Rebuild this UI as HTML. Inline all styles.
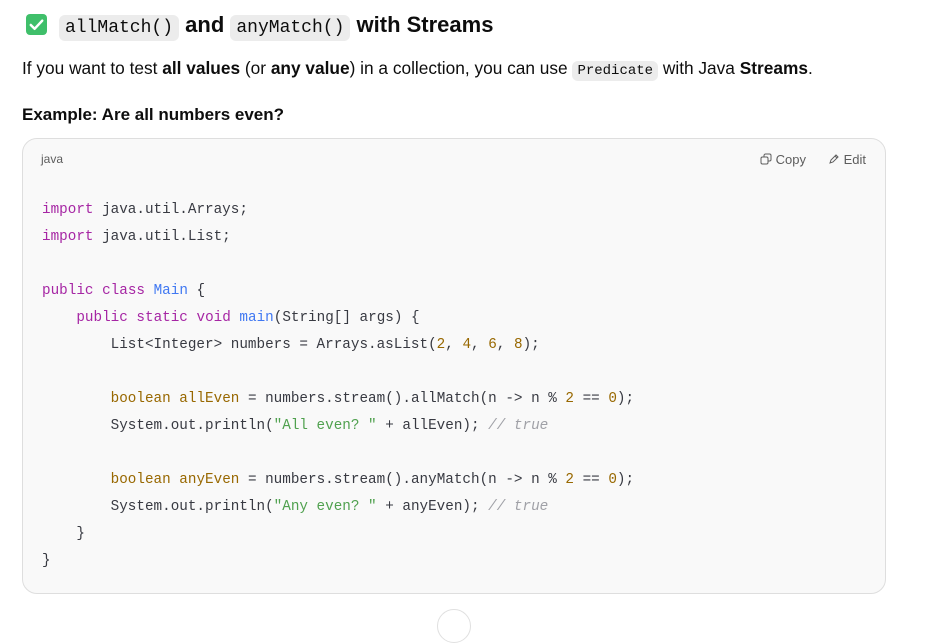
<!DOCTYPE html>
<html><head><meta charset="utf-8"><style>
body{margin:0;width:926px;height:618px;overflow:hidden;background:#fff;font-family:"Liberation Sans",sans-serif;color:#0d0d0d;position:relative}
.a{position:absolute;white-space:pre}
.ic{font-family:"Liberation Mono",monospace;background:#ececec;border-radius:6px}
h2{position:absolute;left:26px;top:8px;margin:0;font-size:22px;font-weight:bold;line-height:34px;white-space:pre}
h2 .ic{font-weight:normal;font-size:18px;padding:3px 6px}
.chk{display:inline-block;width:21px;height:21px;background:#3fbf6a;border-radius:4px;vertical-align:-3px;margin-right:12px;position:relative}
.box{position:absolute;left:22px;top:138px;width:862px;height:454px;background:#f9f9f9;border:1px solid #dedede;border-radius:15px}
.code{font-family:"Liberation Mono",monospace;font-size:14.3px;color:#383a42}
.k{color:#a626a4}.f{color:#4078f2}.n{color:#986801}.s{color:#50a14f}.c{color:#a0a1a7;font-style:italic}.t{color:#986801}
</style></head><body>
<h2><span class="chk"><svg width="21" height="21" viewBox="0 0 22 22" style="position:absolute;left:0;top:0"><path d="M5 11.5l4 4 8-8.5" stroke="#fff" stroke-width="2.6" fill="none" stroke-linecap="round" stroke-linejoin="round"/></svg></span><span class="ic">allMatch()</span> and <span class="ic">anyMatch()</span> with Streams</h2>
<div class="a" style="left:22px;top:58px;font-size:17.3px">If you want to test <b>all values</b> (or <b>any value</b>) in a collection, you can use <span class="ic" style="font-size:14px;padding:2px 5px">Predicate</span> with Java <b>Streams</b>.</div>
<div class="a" style="left:22px;top:105px;font-size:17px;font-weight:bold">Example: Are all numbers even?</div>
<div class="box"></div>
<div class="a" style="left:41px;top:152px;font-size:12px;color:#5d5d5d">java</div>
<div class="a" style="left:760px;top:152px;font-size:13px;color:#5d5d5d"><svg width="12" height="12" viewBox="0 0 12 12" style="vertical-align:-1px"><rect x="1" y="4" width="7" height="7" rx="1.5" fill="none" stroke="#5d5d5d"/><path d="M4 4V2.5A1.5 1.5 0 0 1 5.5 1h4A1.5 1.5 0 0 1 11 2.5v4A1.5 1.5 0 0 1 9.5 8H8" fill="none" stroke="#5d5d5d"/></svg> Copy</div>
<div class="a" style="left:828px;top:152px;font-size:13px;color:#5d5d5d"><svg width="12" height="12" viewBox="0 0 12 12" style="vertical-align:-1px"><path d="M2 10l1-3 5-5 2 2-5 5z M7 3l2 2" fill="none" stroke="#5d5d5d"/></svg> Edit</div>
<div class="a code" style="left:42px;top:197px;line-height:27px"><span class="k">import</span> java.util.Arrays;
<span class="k">import</span> java.util.List;

<span class="k">public</span> <span class="k">class</span> <span class="f">Main</span> {
    <span class="k">public</span> <span class="k">static</span> <span class="k">void</span> <span class="f">main</span>(String[] args) {
        List&lt;Integer&gt; numbers = Arrays.asList(<span class="n">2</span>, <span class="n">4</span>, <span class="n">6</span>, <span class="n">8</span>);

        <span class="t">boolean</span> <span class="t">allEven</span> = numbers.stream().allMatch(n -&gt; n % <span class="n">2</span> == <span class="n">0</span>);
        System.out.println(<span class="s">"All even? "</span> + allEven); <span class="c">// true</span>

        <span class="t">boolean</span> <span class="t">anyEven</span> = numbers.stream().anyMatch(n -&gt; n % <span class="n">2</span> == <span class="n">0</span>);
        System.out.println(<span class="s">"Any even? "</span> + anyEven); <span class="c">// true</span>
    }
}</div>
<div style="position:absolute;left:437px;top:609px;width:32px;height:32px;border:1px solid #e0e0e0;border-radius:50%;background:#fff"></div>
</body></html>
